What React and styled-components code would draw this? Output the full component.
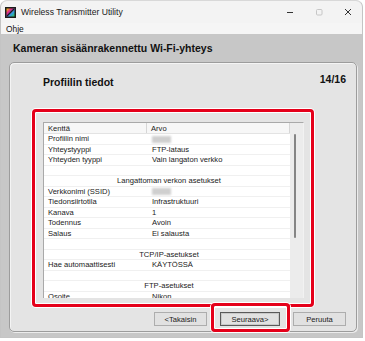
import React from 'react'
import styled, { createGlobalStyle } from 'styled-components'

const GlobalStyle = createGlobalStyle`
  html, body {
    margin: 0;
    padding: 0;
    background: #ffffff;
  }
  body {
    font-family: "Liberation Sans", Arial, sans-serif;
  }
`

const Window = styled.div`
  width: 363px;
  height: 338px;
  display: flex;
  flex-direction: column;
  border-radius: 7px 7px 0 0;
  border: 1px solid #c4c4c4;
  border-top-color: #d8d8d8;
  box-sizing: border-box;
  overflow: hidden;
  background: #c7c7c7;
`

const TitleBar = styled.div`
  height: 22px;
  flex: none;
  display: flex;
  align-items: center;
  background: #f3f3f3;
  padding-left: 4px;
`

const AppIcon = styled.svg`
  width: 11px;
  height: 11px;
  margin-right: 5px;
`

const TitleText = styled.span`
  font-size: 8.6px;
  color: #1a1a1a;
  flex: 1;
`

const Controls = styled.div`
  display: flex;
  align-items: center;
`

const ControlButton = styled.div`
  width: 29px;
  height: 22px;
  display: flex;
  align-items: center;
  justify-content: center;
`

const MenuBar = styled.div`
  height: 11px;
  flex: none;
  display: flex;
  align-items: center;
  padding: 0 0 0 5px;
  background: #f5f5f5;
  font-size: 8.4px;
  color: #111;
`

const Body = styled.div`
  flex: 1;
  display: flex;
  flex-direction: column;
  padding: 0 5px 5px 8px;
  min-height: 0;
`

const Heading = styled.div`
  height: 28px;
  flex: none;
  display: flex;
  align-items: center;
  padding-left: 4px;
  font-size: 10.5px;
  font-weight: bold;
  color: #111;
`

const Panel = styled.div`
  flex: 1;
  display: flex;
  flex-direction: column;
  background: #e4e4e4;
  border: 1px solid #9c9c9c;
  border-radius: 5px;
  box-shadow: inset 1px 1px 0 #f4f4f4, 1px 1px 0 #ececec;
  padding: 0 10px 0 22px;
  min-height: 0;
`

const PanelHeader = styled.div`
  height: 46px;
  flex: none;
  display: flex;
  justify-content: space-between;
  font-size: 10.5px;
  font-weight: bold;
  color: #111;
`

const StepTitle = styled.div`
  padding: 13px 0 0 11px;
`

const StepCount = styled.div`
  padding-top: 10px;
`

const Highlight = styled.div`
  width: 282px;
  height: 198px;
  box-sizing: border-box;
  border: 3px solid #e5001a;
  border-radius: 4px;
  box-shadow: 0 0 0 1px #ffffff, inset 0 0 0 1px #ffffff;
  padding: 10px 7px 0 8px;
  display: flex;
`

const ListFrame = styled.div`
  width: 261px;
  height: 176px;
  box-sizing: border-box;
  border: 1px solid #a9a9a9;
  border-right-color: #f2f2f2;
  border-bottom: none;
  background: #ffffff;
  display: flex;
  overflow: hidden;
`

const ListBody = styled.div`
  flex: 1;
  display: flex;
  flex-direction: column;
  min-width: 0;
`

const HeaderRow = styled.div`
  height: 10px;
  flex: none;
  display: grid;
  grid-template-columns: 103px 1fr;
  background: #f7f7f7;
  border-bottom: 1px solid #e3e3e3;
  font-size: 7.6px;
  color: #222;
`

const HeaderCell = styled.div`
  display: flex;
  align-items: center;
  padding-left: 4px;
  border-right: 1px solid #d6d6d6;
`

const Row = styled.div`
  height: 10.5px;
  flex: none;
  box-sizing: border-box;
  display: grid;
  grid-template-columns: ${p => (p.$section ? '1fr' : '104px 1fr')};
  border-bottom: 1px solid #f0f0f0;
  font-size: 7.6px;
  line-height: 9.5px;
  color: #1a1a1a;
  white-space: nowrap;
`

const Cell = styled.div`
  padding-left: 4px;
  overflow: hidden;
`

const SectionCell = styled.div`
  text-align: center;
  padding-left: 4px;
`

const Hidden = styled.div`
  width: 19px;
  height: 7px;
  margin-top: 1.5px;
  background: #cfcfcf;
  filter: blur(0.8px);
`

const ScrollTrack = styled.div`
  width: 13px;
  flex: none;
  background: #ececec;
  display: flex;
  justify-content: center;
  padding-top: 11px;
`

const ScrollThumb = styled.div`
  width: 2px;
  height: 104px;
  border-radius: 1px;
  background: #858585;
  margin-left: -3px;
`

const ButtonRow = styled.div`
  flex: 1;
  display: flex;
  align-items: flex-end;
  justify-content: flex-end;
  gap: 13px;
  padding-bottom: 5px;
`

const ButtonSlot = styled.div`
  position: relative;
  display: flex;

  ${p => p.$marked && `
    &::after {
      content: '';
      position: absolute;
      left: -9px;
      right: -10px;
      top: -9px;
      bottom: -6px;
      border: 3px solid #e5001a;
      border-radius: 4px;
      box-shadow: 0 0 0 1px #ffffff, inset 0 0 0 1px #ffffff;
    }
  `}
`

const Button = styled.div`
  width: ${p => p.$w}px;
  height: 14px;
  box-sizing: border-box;
  display: flex;
  align-items: center;
  justify-content: center;
  background: #e1e1e1;
  border: 1px solid ${p => (p.$default ? '#5a5a5a' : '#adadad')};
  box-shadow: ${p => (p.$default ? 'inset 0 0 0 1px #c9c9c9' : 'none')};
  font-size: 7.6px;
  color: #1a1a1a;
`

const rows = [
  { k: 'Profiilin nimi', hidden: true },
  { k: 'Yhteystyyppi', v: 'FTP-lataus' },
  { k: 'Yhteyden tyyppi', v: 'Vain langaton verkko' },
  { blank: true },
  { section: 'Langattoman verkon asetukset' },
  { k: 'Verkkonimi (SSID)', hidden: true },
  { k: 'Tiedonsiirtotila', v: 'Infrastruktuuri' },
  { k: 'Kanava', v: '1' },
  { k: 'Todennus', v: 'Avoin' },
  { k: 'Salaus', v: 'Ei salausta' },
  { blank: true },
  { section: 'TCP/IP-asetukset' },
  { k: 'Hae automaattisesti', v: 'KÄYTÖSSÄ' },
  { blank: true },
  { section: 'FTP-asetukset' },
  { k: 'Osoite', v: 'Nikon' },
]

function WindowIcon() {
  return (
    <AppIcon viewBox="0 0 11 11">
      <defs>
        <linearGradient id="ig" x1="0" y1="0" x2="1" y2="1">
          <stop offset="0" stopColor="#f5d000" />
          <stop offset="0.35" stopColor="#e0208a" />
          <stop offset="0.65" stopColor="#2aa0e6" />
          <stop offset="1" stopColor="#3cc24a" />
        </linearGradient>
      </defs>
      <rect x="0" y="0" width="11" height="11" fill="#1c1c1c" />
      <rect x="1.5" y="1.5" width="8" height="8" fill="url(#ig)" />
      <path d="M2 9 L9 2" stroke="#1c1c1c" strokeWidth="1.2" />
    </AppIcon>
  )
}

export default function App() {
  return (
    <>
      <GlobalStyle />
      <Window>
        <TitleBar>
          <WindowIcon />
          <TitleText>Wireless Transmitter Utility</TitleText>
          <Controls>
            <ControlButton>
              <svg width="10" height="10" viewBox="0 0 10 10">
                <path d="M2 5.5 H8" stroke="#333" strokeWidth="1" />
              </svg>
            </ControlButton>
            <ControlButton>
              <svg width="10" height="10" viewBox="0 0 10 10">
                <rect x="2.5" y="2.5" width="5.5" height="5.5" rx="1" fill="none" stroke="#c6c6c6" strokeWidth="1" />
              </svg>
            </ControlButton>
            <ControlButton>
              <svg width="10" height="10" viewBox="0 0 10 10">
                <path d="M2 2 L8 8 M8 2 L2 8" stroke="#333" strokeWidth="1" />
              </svg>
            </ControlButton>
          </Controls>
        </TitleBar>
        <MenuBar>Ohje</MenuBar>
        <Body>
          <Heading>Kameran sisäänrakennettu Wi-Fi-yhteys</Heading>
          <Panel>
            <PanelHeader>
              <StepTitle>Profiilin tiedot</StepTitle>
              <StepCount>14/16</StepCount>
            </PanelHeader>
            <Highlight>
              <ListFrame>
                <ListBody>
                  <HeaderRow>
                    <HeaderCell>Kenttä</HeaderCell>
                    <HeaderCell>Arvo</HeaderCell>
                  </HeaderRow>
                  {rows.map((r, i) =>
                    r.section ? (
                      <Row key={i} $section>
                        <SectionCell>{r.section}</SectionCell>
                      </Row>
                    ) : r.blank ? (
                      <Row key={i} $section>
                        <SectionCell />
                      </Row>
                    ) : (
                      <Row key={i}>
                        <Cell>{r.k}</Cell>
                        <Cell>{r.hidden ? <Hidden /> : r.v}</Cell>
                      </Row>
                    )
                  )}
                </ListBody>
                <ScrollTrack>
                  <ScrollThumb />
                </ScrollTrack>
              </ListFrame>
            </Highlight>
            <ButtonRow>
              <ButtonSlot>
                <Button $w={53}>&lt;Takaisin</Button>
              </ButtonSlot>
              <ButtonSlot $marked>
                <Button $w={60} $default>Seuraava&gt;</Button>
              </ButtonSlot>
              <ButtonSlot>
                <Button $w={53}>Peruuta</Button>
              </ButtonSlot>
            </ButtonRow>
          </Panel>
        </Body>
      </Window>
    </>
  )
}
